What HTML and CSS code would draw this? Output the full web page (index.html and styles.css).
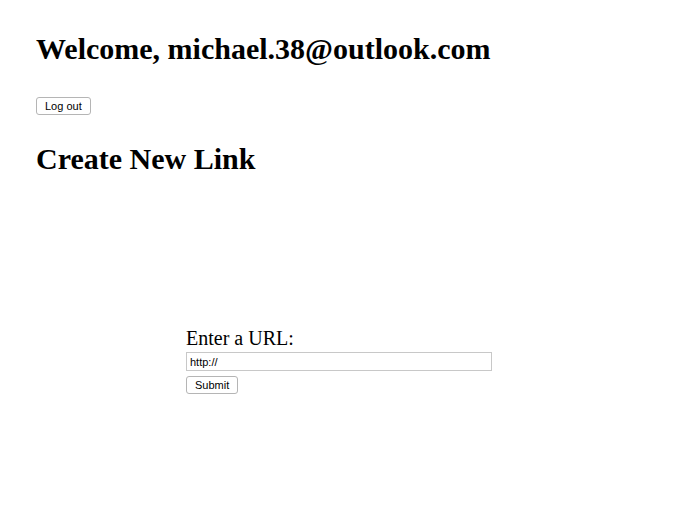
FILE: index.html
```html
<!DOCTYPE html>
<html>
<head>
<meta charset="utf-8">
<link rel="stylesheet" href="styles.css">
</head>
<body>
<div class="page">
  <h1 class="title">Welcome, michael.38@outlook.com</h1>
  <button class="btn">Log out</button>
  <h1 class="title second">Create New Link</h1>
  <form class="link-form">
    <label class="label" for="url">Enter a URL:</label>
    <input class="url-input" id="url" type="text" value="http://">
    <button class="btn" type="button">Submit</button>
  </form>
</div>
</body>
</html>
```

FILE: styles.css
```css
html, body {
  margin: 0;
  padding: 0;
  background: #fff;
}
.page {
  padding: 22px 36px;
  font-family: "Liberation Serif", "Times New Roman", serif;
  color: #000;
}
.title {
  font-size: 30px;
  font-weight: bold;
  margin: 0;
  line-height: 54px;
}
.second {
  margin-top: 17px;
}
.btn {
  display: block;
  font-family: "Liberation Sans", Arial, sans-serif;
  font-size: 11px;
  height: 18px;
  padding: 0 8px;
  background: #fff;
  border: 1px solid #b5b5b5;
  border-radius: 3px;
  color: #000;
  margin-top: 21px;
}
.link-form {
  display: flex;
  flex-direction: column;
  align-items: flex-start;
  margin: 138px 0 0 150px;
}
.label {
  font-size: 20px;
  line-height: 28px;
}
.url-input {
  width: 306px;
  height: 19px;
  box-sizing: border-box;
  border: 1px solid #c8c8c8;
  padding: 0 3px;
  font-family: "Liberation Sans", Arial, sans-serif;
  font-size: 11px;
  margin: 0;
}
.link-form .btn {
  margin-top: 5px;
}
```
